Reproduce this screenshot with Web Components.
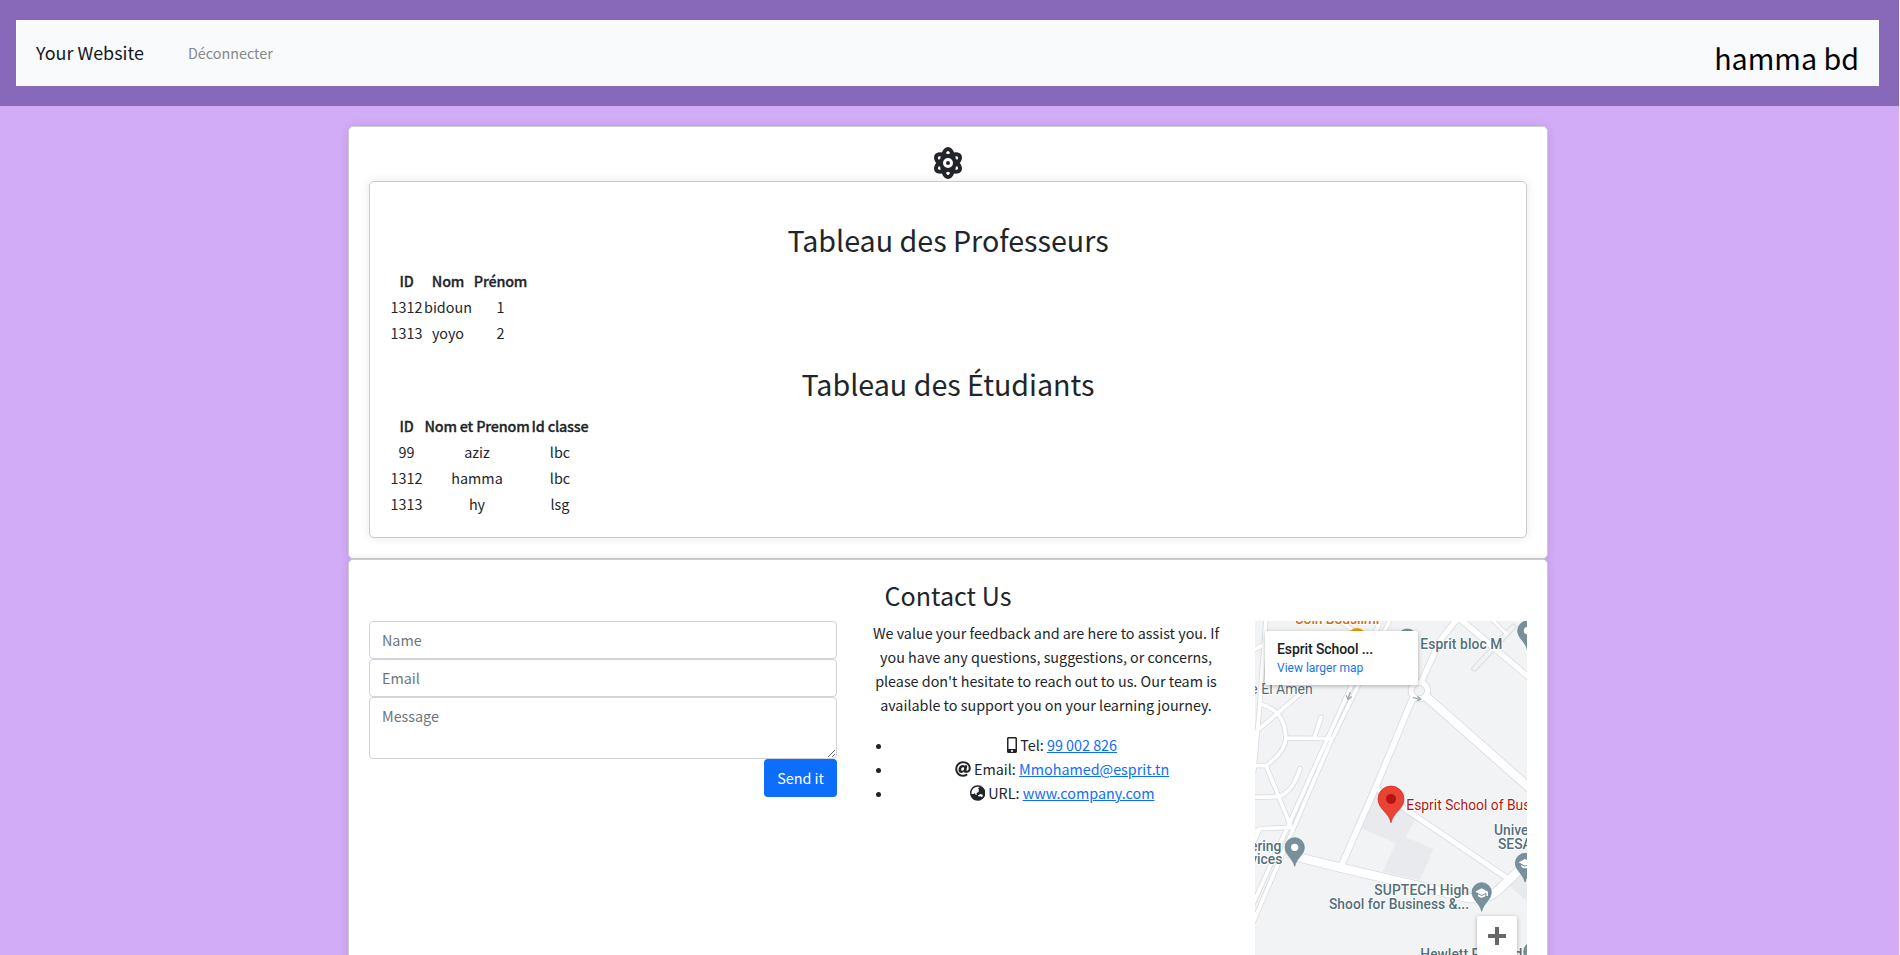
<!DOCTYPE html>
<html lang="fr">
<head>
<meta charset="utf-8">
<title>Your Website</title>
<style>
html{background:#f4eafd;height:955px;overflow:hidden}
body{margin:0;width:1899px;height:955px;overflow:hidden;background:#d3acf8;color:#212529;font:14.35px/24px "Noto Sans CJK SC","Noto Sans",sans-serif}
</style>
</head>
<body>
<site-header brand="Your Website" user="hamma bd"><span>Déconnecter</span></site-header>
<page-card>
  <fa-icon name="atom" size="32" slot="icon"></fa-icon>
  <page-card inner>
    <data-table heading="Tableau des Professeurs" cols="33,50,55" rows="ID|Nom|Prénom;1312|bidoun|1;1313|yoyo|2"></data-table>
    <data-table heading="Tableau des Étudiants" cols="33,108,58" rows="ID|Nom et Prenom|Id classe;99|aziz|lbc;1312|hamma|lbc;1313|hy|lsg"></data-table>
  </page-card>
</page-card>
<page-card tall>
  <contact-section></contact-section>
</page-card>
<script>
const define = (name, render) => customElements.define(name, class extends HTMLElement {
  connectedCallback() {
    if (!this.shadowRoot) this.attachShadow({mode: 'open'}).innerHTML = render(this);
  }
});

const ICONS = {
  atom: [448, 'M224 224a32 32 0 1 0 32 32A32 32 0 0 0 224 224Zm214.172-96c-10.877-19.5-40.51-50.75-116.275-41.875C300.392 34.875 267.634 0 224 0s-76.39 34.875-97.897 86.125C50.337 77.375 20.706 108.5 9.829 128-6.55 157.375-5.175 201.125 34.958 256-5.175 310.875-6.55 354.625 9.829 384c29.13 52.375 101.647 43.625 116.274 41.875C147.608 477.125 180.364 512 224 512s76.393-34.875 97.897-86.125c14.629 1.75 87.144 10.5 116.275-41.875C454.55 354.625 453.175 310.875 413.04 256 453.175 201.125 454.55 157.375 438.171 128ZM63.339 352c-4-7.25-.125-24.75 15.004-48.25 6.877 6.5 14.129 12.875 21.88 19.125 1.625 13.75 4 27.125 6.75 40.125C82.345 363.875 67.09 358.625 63.339 352Zm36.885-162.875c-7.752 6.25-15.004 12.625-21.881 19.125-15.129-23.5-19.004-41-15.004-48.25 3.377-6.125 16.379-11.5 37.885-11.5 1.75 0 3.875.375 5.75.375C104.099 162.25 101.849 175.625 100.224 189.125ZM224 64c9.502 0 22.256 13.5 33.883 37.25-11.252 3.75-22.504 8-33.883 12.875-11.377-4.875-22.629-9.125-33.883-12.875C201.745 77.5 214.497 64 224 64Zm0 384c-9.502 0-22.254-13.5-33.883-37.25 11.254-3.75 22.506-8 33.883-12.875C235.378 402.75 246.63 407 257.882 410.75 246.255 434.5 233.501 448 224 448Zm0-112a80 80 0 1 1 80-80A80 80 0 0 1 224 336ZM384.659 352c-3.625 6.625-19.004 11.875-43.635 11 2.752-13 5.127-26.375 6.752-40.125 7.752-6.25 15.004-12.625 21.879-19.125C384.784 327.25 388.659 344.75 384.659 352ZM369.655 208.25c-6.875-6.5-14.127-12.875-21.879-19.125-1.625-13.5-3.875-26.875-6.752-40.25 1.875 0 4.002-.375 5.752-.375 21.504 0 34.508 5.375 37.883 11.5C388.659 167.25 384.784 184.75 369.655 208.25Z'],
  mobile: [320, 'M272 0H48C21.5 0 0 21.5 0 48v416c0 26.5 21.5 48 48 48h224c26.5 0 48-21.5 48-48V48c0-26.5-21.5-48-48-48zM160 480c-17.7 0-32-14.3-32-32s14.3-32 32-32 32 14.3 32 32-14.3 32-32 32zm112-108c0 6.6-5.4 12-12 12H60c-6.6 0-12-5.4-12-12V60c0-6.6 5.4-12 12-12h200c6.6 0 12 5.4 12 12v312z'],
  at: [512, 'M256 8C118.941 8 8 118.919 8 256c0 137.059 110.919 248 248 248 48.154 0 95.342-14.14 135.408-40.223 12.005-7.815 14.625-24.288 5.552-35.372l-10.177-12.433c-7.671-9.371-21.179-11.667-31.373-5.129C325.92 429.757 291.314 440 256 440c-101.458 0-184-82.542-184-184S154.542 72 256 72c100.139 0 184 57.619 184 160 0 38.786-21.093 79.742-58.17 83.693-17.349-.454-16.91-12.857-13.476-30.024l23.433-121.11C394.653 149.75 383.308 136 368.225 136h-44.981a13.518 13.518 0 0 0-13.432 11.993l-.01.092c-14.697-17.901-40.448-21.775-59.971-21.775-74.58 0-137.831 62.234-137.831 151.46 0 65.303 36.785 105.87 96 105.87 26.984 0 57.369-15.637 74.991-38.333 9.522 34.104 40.613 34.104 70.671 34.104C462.609 379.41 504 307.798 504 232 504 95.653 394.023 8 256 8zm-21.68 304.43c-22.249 0-36.07-15.623-36.07-40.771 0-44.993 30.779-72.729 58.63-72.729 22.292 0 35.601 15.241 35.601 40.77 0 45.061-33.875 72.73-58.161 72.73z'],
  globe: [496, 'M248 8C111.03 8 0 119.03 0 256s111.03 248 248 248 248-111.03 248-248S384.97 8 248 8zm-11.34 240.23c-2.89 4.82-8.1 7.77-13.72 7.77h-.31c-4.24 0-8.31 1.69-11.31 4.69l-5.66 5.66c-3.12 3.12-3.12 8.19 0 11.31l5.66 5.66c3 3 4.69 7.07 4.69 11.31V304c0 8.84-7.16 16-16 16h-6.11c-6.06 0-11.6-3.42-14.31-8.85l-22.62-45.23c-2.44-4.88-8.95-5.94-12.81-2.08l-19.47 19.46c-3 3-7.07 4.69-11.31 4.69H50.81C49.12 277.55 48 266.92 48 256c0-110.28 89.72-200 200-200 21.51 0 42.2 3.51 61.63 9.82l-50.16 38.53c-5.11 3.41-4.63 11.06.86 13.81l10.83 5.41c5.42 2.71 8.84 8.25 8.84 14.31V216c0 4.42-3.58 8-8 8h-3.06c-3.03 0-5.8-1.71-7.15-4.42-1.56-3.12-5.96-3.29-7.76-.3l-17.37 28.95zM408 358.43c0 4.24-1.69 8.31-4.69 11.31l-9.57 9.57c-3 3-7.07 4.69-11.31 4.69h-15.16c-4.24 0-8.31-1.69-11.31-4.69l-13.01-13.01a26.767 26.767 0 0 0-25.42-7.04l-21.27 5.32c-1.27.32-2.57.48-3.88.48h-10.34c-4.24 0-8.31-1.69-11.31-4.69l-11.91-11.91a8.008 8.008 0 0 1-2.34-5.66v-10.2c0-3.27 1.99-6.21 5.03-7.43l39.34-15.74c1.98-.79 3.86-1.82 5.59-3.05l23.71-16.89a7.978 7.978 0 0 1 4.64-1.48h12.09c3.23 0 6.15 1.94 7.39 4.93l5.35 12.85a4 4 0 0 0 3.69 2.46h3.8c1.78 0 3.35-1.18 3.84-2.88l4.2-14.47c.5-1.71 2.06-2.88 3.84-2.88h6.06c2.21 0 4 1.79 4 4v12.93c0 2.12.84 4.16 2.34 5.66l11.91 11.91c3 3 4.69 7.07 4.69 11.31v24.6z']
};

define('fa-icon', el => {
  const [w, d] = ICONS[el.getAttribute('name')], h = +(el.getAttribute('size') || 16);
  return `<style>:host{display:inline-block;height:${h}px;vertical-align:-2px}svg{display:block}</style>
  <svg width="${w * h / 512}" height="${h}" viewBox="0 0 ${w} 512" fill="currentColor"><path d="${d}"/></svg>`;
});

define('site-header', el => `<style>
  :host{display:block;background:#8768b9;padding:20px 20px 20px 16px}
  nav{display:flex;align-items:center;height:66px;background:#f8fafc;padding:0 20px}
  .brand{margin-top:-2px;font-size:17.95px;line-height:30px;color:#16181b}
  .link{margin-left:44px;color:#858789;line-height:24px}
  .user{margin:9px 0 0 auto;font-size:28.7px;line-height:38px;color:#000}
</style><nav><span class="brand">${el.getAttribute('brand')}</span><span class="link"><slot></slot></span><span class="user">${el.getAttribute('user')}</span></nav>`);

define('page-card', () => `<style>
  :host{display:block;box-sizing:border-box;width:1200px;height:433px;margin:20px 0 0 348px;padding:20px;background:#fff;border:1px solid #ccc;border-radius:5px;box-shadow:0 0 10px rgba(0,0,0,.1)}
  :host([inner]){width:auto;height:357px;margin:0}
  :host([tall]){height:420px;margin-top:0}
  .icon{display:flex;justify-content:center}
  ::slotted([slot=icon]){margin:0 1px 2px 0}
</style><div class="icon"><slot name="icon"></slot></div><slot></slot>`);

define('data-table', el => {
  const cols = el.getAttribute('cols').split(',');
  const rows = el.getAttribute('rows').split(';').map(r => r.split('|'));
  return `<style>
  :host{display:block}
  h2{margin:19px 0 9px;font-size:28.65px;line-height:38.4px;font-weight:400;text-align:center}
  .t{display:grid;grid-template-columns:${cols.map(c => c + 'px').join(' ')};grid-auto-rows:26px;line-height:26px;text-align:center;white-space:nowrap}
  .t>*{display:flex;justify-content:center}
  b{font-weight:500;letter-spacing:-.17px;-webkit-text-stroke:.3px}
  </style><h2>${el.getAttribute('heading')}</h2><div class="t">${rows.map((r, i) => r.map(c => i ? `<span>${c}</span>` : `<b>${c}</b>`).join('')).join('')}</div>`;
});

define('contact-section', () => `<style>
  :host{display:block}
  h3{margin:-1px 0 8px;font-size:25.1px;line-height:33.6px;font-weight:400;text-align:center}
  .cols{display:grid;grid-template-columns:468px 370px 272px;gap:24px}
  p{margin:0 0 16px;text-align:center}
  ul{margin:0;padding-left:32px;text-align:center}
  li{height:24px}
  li::marker{font-size:13.5px}
  a{color:#0d6efd;text-decoration:underline}
</style><h3>Contact Us</h3><div class="cols">
  <contact-form></contact-form>
  <div><p>We value your feedback and are here to assist you. If<br>you have any questions, suggestions, or concerns,<br>please don't hesitate to reach out to us. Our team is<br>available to support you on your learning journey.</p>
  <ul><li><fa-icon name="mobile"></fa-icon> Tel: <a href="#">99 002 826</a></li>
  <li><fa-icon name="at"></fa-icon> Email: <a href="#">Mmohamed@esprit.tn</a></li>
  <li><fa-icon name="globe"></fa-icon> URL: <a href="#">www.company.com</a></li></ul></div>
  <map-embed></map-embed></div>`);

define('contact-form', () => `<style>
  :host{display:flex;flex-direction:column}
  input,textarea{display:block;box-sizing:border-box;width:100%;height:38px;margin:0;padding:6px 12px;border:1px solid #ced4da;border-radius:4px;background:#fff;font:inherit;color:#212529}
  textarea{height:62px}
  ::placeholder{color:#6c757d;opacity:1}
  button{align-self:flex-end;width:73px;height:38px;border:0;border-radius:4px;background:#0d6efd;color:#fff;font:inherit;padding:0}
</style><input placeholder="Name"><input placeholder="Email"><textarea placeholder="Message"></textarea><button>Send it</button>`);

/* Road centre lines: [path, width]. */
const ROADS = [
  ['M48 25L28 300L12 480M10 120L60 95M170 235L10 372', 11],
  ['M200 -10Q280 40 330 75', 9],
  ['M30 282Q104 300 108 384Q106 425 48 467L10 467M48 467L125 655M108 384L240 386M193 384L213 322M10 562L80 560Q125 555 150 476M10 668L30 656L120 652M30 656L10 700', 11],
  ['M395 25L10 880', 11],
  ['M422 25L238 405L10 935', 11],
  ['M625 22L570 92L510 225M625 22L840 205', 16],
  ['M718 20L768 70', 9],
  ['M488 265L380 525L275 765', 17],
  ['M515 248L840 535', 25],
  ['M380 535L470 600L765 800', 15],
  ['M130 738L280 775L600 850Q700 885 745 840L840 750', 25]
];
const road = (extra, color) => ROADS.map(([d, w]) => `<path d="${d}" stroke="${color}" stroke-width="${w + extra}"/>`).join('');
const pin = (x, y, inner) => `<g transform="translate(${x} ${y})"><path d="M0 57C-6 32-29 22-29 0A29 29 0 0 1 29 0C29 22 6 32 0 57Z" fill="#78909c" stroke="#607d8b" stroke-width="2"/>${inner}</g>`;
const DOT = '<circle r="11" fill="#fff"/>';
const CAP = '<path d="M-19-2L0-12L19-2V11H14V1L0 8Z M-11 6V12Q0 20 11 12V6L0 11Z" fill="#fff"/>';

define('map-embed', () => `<style>
  :host{display:block;position:relative;width:272px;height:334px;overflow:hidden;background:#f1f3f4;font-family:Roboto,sans-serif}
  svg{display:block}
  text{font-size:41.5px;font-weight:500;fill:#546e7a;stroke:#fff;stroke-width:5px;paint-order:stroke;stroke-linejoin:round}
  .box{position:absolute;left:10px;top:10px;width:153px;height:54px;box-sizing:border-box;padding:9px 12px;background:#fff;border-radius:2px;box-shadow:0 1px 4px rgba(0,0,0,.3)}
  .box b{display:block;font-size:14px;line-height:18px;font-weight:500;letter-spacing:-.1px;color:#202124}
  .box a{display:block;font-size:12px;line-height:20px;color:#1a73e8}
  .plus{position:absolute;left:222px;top:295px;width:40px;height:40px;background:#fff;border-radius:2px 2px 0 0;box-shadow:0 1px 4px rgba(0,0,0,.3)}
</style>
<svg width="272" height="334" viewBox="15 33 816 1002">
  <path d="M385 535L495 630L467 680L550 718L510 810L398 785L437 700L335 655ZM780 828L831 780V875Z" fill="#e8eaed"/>
  <g fill="none" stroke-linecap="round" stroke-linejoin="round">
    <path d="M673 176L790 50" stroke="#d9dce1" stroke-width="18"/>${road(5, '#d9dce1')}<circle cx="508" cy="242" r="35" fill="#d9dce1"/>
    <path d="M673 176L790 50" stroke="#f1f3f4" stroke-width="12"/>${road(0, '#fff')}<circle cx="508" cy="242" r="32" fill="#fff"/>
    <circle cx="508" cy="242" r="16" fill="#f1f3f4" stroke="#d9dce1" stroke-width="3"/>
    <path d="M300 247L294 267M289 257L294 268L304 261M490 263L512 268M503 260L513 268L502 272" stroke="#9aabb5" stroke-width="4"/>
  </g>
  <circle cx="321" cy="82" r="28" fill="#f29900"/>
  ${pin(472, 86, DOT)}${pin(832, 62, DOT)}${pin(134, 712, DOT)}${pin(825, 759, CAP)}${pin(695, 847, CAP)}${pin(850, 1025, DOT)}
  <text x="134" y="43" style="fill:#d56e0c" textLength="254">Coin Bouslimi</text>
  <text x="511" y="118" textLength="246">Esprit bloc M</text>
  <text x="188" y="253" text-anchor="end" style="font-weight:400;font-size:42px">de El Amen</text>
  <text x="94" y="722" text-anchor="end">Engineering</text>
  <text x="97" y="763" text-anchor="end">Services</text>
  <text x="732" y="676">Université</text>
  <text x="744" y="718">SESAME</text>
  <text x="373" y="856" textLength="284">SUPTECH High</text>
  <text x="237" y="898" textLength="420">Shool for Business &amp;...</text>
  <text x="511" y="1048" textLength="306">Hewlett Packard</text>
  <text x="469" y="600" style="fill:#b31412;font-weight:400" textLength="470">Esprit School of Business</text>
  <path d="M423 638C417 607 384 598 384 567A39 39 0 0 1 462 567C462 598 429 607 423 638Z" fill="#ea4335" stroke="#c5221f" stroke-width="2"/><circle cx="423" cy="567" r="15" fill="#b31412"/>
</svg>
<div class="box"><b>Esprit School ...</b><a>View larger map</a></div>
<div class="plus"><svg width="40" height="40"><path d="M11 18h7v-7h4v7h7v4h-7v7h-4v-7h-7z" fill="#666"/></svg></div>`);
</script>
</body>
</html>
